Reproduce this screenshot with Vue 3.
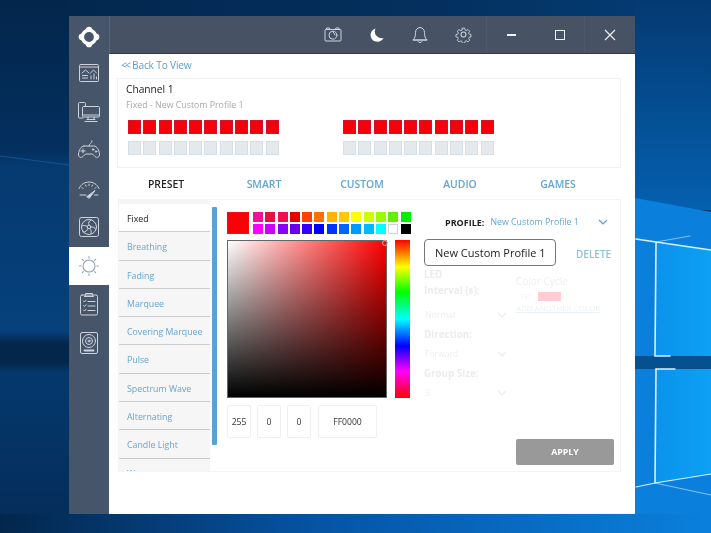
<script setup>
const leds = Array.from({ length: 10 }, (_, i) => i)
const tabs = ['PRESET', 'SMART', 'CUSTOM', 'AUDIO', 'GAMES']
const modes = ['Fixed', 'Breathing', 'Fading', 'Marquee', 'Covering Marquee', 'Pulse', 'Spectrum Wave', 'Alternating', 'Candle Light', 'Wave']
const swatches = [
  '#f0109a', '#e8103c', '#f01050', '#e80000', '#ff4000', '#ff7000', '#ffb400', '#ffc800', '#ffff00', '#ccff00', '#99ff00', '#66ee00', '#00ee00',
  '#ff00ff', '#cc00ff', '#8800ff', '#6600ee', '#3300ff', '#0000ff', '#0033ff', '#0066ff', '#0099ff', '#00bbff', '#00ffff', '#ffffff', '#000000'
]
</script>

<template>
  <div class="desktop">
    <svg class="wallpaper" width="711" height="533" viewBox="0 0 711 533">
      <defs>
        <linearGradient id="top" x1="0" y1="0" x2="1" y2="0">
          <stop offset="0" stop-color="#03264c" />
          <stop offset="0.6" stop-color="#03305e" />
          <stop offset="1" stop-color="#043e78" />
        </linearGradient>
        <linearGradient id="left" x1="0" y1="0" x2="0" y2="1">
          <stop offset="0" stop-color="#03264c" />
          <stop offset="0.28" stop-color="#042f5e" />
          <stop offset="0.31" stop-color="#053a70" />
          <stop offset="0.62" stop-color="#05417c" />
          <stop offset="0.645" stop-color="#04264b" />
          <stop offset="0.68" stop-color="#04264b" />
          <stop offset="0.7" stop-color="#05386e" />
          <stop offset="1" stop-color="#042c58" />
        </linearGradient>
        <linearGradient id="right" x1="0" y1="0" x2="0" y2="1">
          <stop offset="0" stop-color="#043a72" />
          <stop offset="1" stop-color="#0560b0" />
        </linearGradient>
        <linearGradient id="floor" x1="0" y1="0" x2="1" y2="0">
          <stop offset="0" stop-color="#03264c" />
          <stop offset="0.45" stop-color="#0654a4" />
          <stop offset="1" stop-color="#0a80dc" />
        </linearGradient>
        <linearGradient id="pane" x1="0" y1="0" x2="1" y2="0">
          <stop offset="0" stop-color="#0b93ec" />
          <stop offset="1" stop-color="#0da0f4" />
        </linearGradient>
      </defs>
      <rect width="711" height="533" fill="url(#top)" />
      <rect x="0" y="0" width="69" height="533" fill="url(#left)" />
      <path d="M0 156 L69 165" stroke="#1a5f9c" stroke-width="1.200" stroke-opacity=".7" />
      <rect x="635" y="0" width="76" height="210" fill="url(#right)" />
      <polygon points="635,198 711,212 711,533 635,533" fill="#0a80dc" />
      <rect x="0" y="514" width="711" height="19" fill="url(#floor)" />
      <polygon points="656,243 711,250 711,356 656,356" fill="url(#pane)" />
      <polygon points="656,369 711,368 711,474 655,483" fill="url(#pane)" />
      <rect x="635" y="356" width="76" height="13" fill="#05518f" />
      <g fill="none" stroke="#d8f1ff" stroke-linecap="round">
        <path d="M656 243 L655 356 L670 356" stroke-width="1.600" />
        <path d="M656 369 L655 483" stroke-width="1.600" />
        <path d="M656 369 L675 369" stroke-width="1.400" />
        <path d="M636 239 L656 242 L711 250" stroke-width="1.600" />
        <path d="M656 242 L690 236" stroke-width="0.800" stroke-opacity=".7" />
        <path d="M636 487 L655 483 L711 474" stroke-width="1.200" />
        <path d="M655 483 L711 495" stroke-width="1" stroke-opacity=".6" />
      </g>
    </svg>

    <div class="window">
      <aside class="sidebar">
        <div class="logo">
          <svg width="24" height="24" viewBox="0 0 26 26">
            <g fill="#fff">
              <circle cx="13" cy="5.200" r="3.400" />
              <circle cx="13" cy="20.800" r="3.400" />
              <circle cx="5.200" cy="13" r="3.400" />
              <circle cx="20.800" cy="13" r="3.400" />
            </g>
            <circle cx="13" cy="13" r="7.200" fill="#47556a" stroke="#fff" stroke-width="3.800" />
          </svg>
        </div>
        <div class="nav">
          <svg width="22" height="20" viewBox="0 0 22 20"><g class="ico"><rect x="1.500" y="1.500" width="19" height="17" rx="1" /><path d="M1.500 4h19M4 10l3.500-3 3.500 3M4.500 12.500h5M4.500 15h5M12.500 10l3-3 3 3M13 16v-3M16 16v-5M18.500 16v-2" /></g></svg>
        </div>
        <div class="nav">
          <svg width="24" height="22" viewBox="0 0 24 22"><g class="ico"><path d="M6 17H2.500a1 1 0 0 1-1-1V2.500a1 1 0 0 1 1-1h5a1 1 0 0 1 1 1V5" /><rect x="5.500" y="5.500" width="17" height="10.500" rx="1" /><path d="M5.500 14h17M11 16v2.500M17 16v2.500M8 20.500h12M10 18.500h8" /></g></svg>
        </div>
        <div class="nav">
          <svg width="24" height="20" viewBox="0 0 24 20"><g class="ico"><path d="M7 6h10c3 0 5 4 5.500 8 .3 3-2.500 4.500-4.500 2.500L15.500 14h-7L6 16.500C4 18.500 1.200 17 1.500 14 2 10 4 6 7 6zM12 6C12 3 15 4 15 1M6 9v4M4 11h4" /><circle cx="16" cy="9.500" r=".8" /><circle cx="19" cy="11.500" r=".8" /></g></svg>
        </div>
        <div class="nav">
          <svg width="24" height="20" viewBox="0 0 24 20"><g class="ico"><path d="M2 9.500C4 5 8 3 12 3s8 2 10 6.500" /><path d="M5 8.500l1 1M8.500 6l.6 1.200M12 5.200v1.300M15.500 6l-.6 1.200M19 8.500l-1 1" /><path d="M3 16h6M17.500 16H21" /><path d="M10 17.500l8-6-5.500 7.500z" fill="#cdd3da" /></g></svg>
        </div>
        <div class="nav">
          <svg width="22" height="22" viewBox="0 0 22 22"><g class="ico"><rect x="1.500" y="1.500" width="19" height="19" rx="2" /><circle cx="11" cy="11" r="7.500" /><circle cx="11" cy="11" r="1.800" /><path d="M11 9.200C10 7 11 4.500 13 3.800M12.700 11c2.200-.5 4.300.5 5 2.500M10 12.500c-.5 2-2.500 3.700-5 3.500M9.300 10.500C7.500 9.500 6 9 4 10M12 12.500c1.200 1.500 1.500 3 1 5" /></g></svg>
        </div>
        <div class="nav active">
          <svg width="24" height="24" viewBox="0 0 24 24"><g fill="none" stroke="#94a3b6" stroke-width="1.100" stroke-linecap="round"><circle cx="12" cy="12" r="6" /><path d="M12 2.500v1.600M12 19.900v1.600M2.500 12h1.600M19.900 12h1.600M5.300 5.300l1.100 1.100M17.600 17.600l1.100 1.100M5.300 18.700l1.100-1.100M17.600 6.400l1.100-1.100" /></g></svg>
        </div>
        <div class="nav">
          <svg width="20" height="24" viewBox="0 0 20 24"><g class="ico"><rect x="1.500" y="3" width="17" height="20" rx="1.500" /><path d="M6.500 3V1.500h7V3l1 1.500h-9zM4.500 9l1 1 1.500-1.800M9 9.500h7M4.500 13.500l1 1 1.500-1.800M9 14h7M4.500 18l1 1 1.500-1.800M9 18.500h7" /></g></svg>
        </div>
        <div class="nav">
          <svg width="20" height="24" viewBox="0 0 20 24"><g class="ico"><rect x="1.500" y="1.500" width="17" height="21" rx="1.500" /><circle cx="10" cy="10" r="6.500" /><circle cx="10" cy="10" r="3.500" /><circle cx="10" cy="10" r="1" /><path d="M5.500 19.500h9" stroke-width="1.800" /></g></svg>
        </div>
      </aside>

      <div class="body">
        <header class="titlebar">
          <div class="tools">
            <svg width="18" height="15" viewBox="0 0 18 15"><g class="ico"><rect x="1" y="2.500" width="16" height="11.500" rx="1" /><circle cx="9" cy="8.200" r="4" /><path d="M2.500 2.500V1h3v1.500M11 2.500 12 1h3v1.500M9 4.500 11 8" /></g></svg>
            <svg width="16" height="16" viewBox="0 0 16 16"><path fill="#fff" d="M6.500 1.500A6.800 6.800 0 0 0 14.500 11 6.800 6.800 0 1 1 6.500 1.500z" /></svg>
            <svg width="16" height="18" viewBox="0 0 16 18"><g class="ico"><path d="M8 1.500c-3 0-4.500 2.500-4.500 5 0 3.500-.5 5.500-2.500 7.500h14c-2-2-2.500-4-2.500-7.500 0-2.500-1.500-5-4.500-5zM1 14h14M6 15.500c.5 1.500 3.500 1.500 4 0" /></g></svg>
            <svg width="17" height="17" viewBox="0 0 24 24"><g class="ico gear"><circle cx="12" cy="12" r="3.500" /><path d="M10 1.500h4l.7 3.300 1.900.8 2.900-1.800 2.800 2.800-1.800 2.900.8 1.900 3.200.6v4l-3.200.7-.8 1.900 1.800 2.900-2.800 2.800-2.900-1.800-1.900.8-.7 3.200h-4l-.7-3.200-1.900-.8-2.900 1.800-2.800-2.800 1.800-2.900-.8-1.900-3.200-.7v-4l3.200-.6.800-1.900-1.800-2.900 2.800-2.800 2.900 1.800 1.900-.8z" transform="translate(12 12) scale(.85) translate(-12 -12)" /></g></svg>
          </div>
          <div class="winbtn divided"><span class="min"></span></div>
          <div class="winbtn"><span class="max"></span></div>
          <div class="winbtn close divided">
            <svg width="12" height="12" viewBox="0 0 12 12"><path d="M1 1l10 10M11 1 1 11" stroke="#e8ebef" stroke-width="1.300" fill="none" /></svg>
          </div>
        </header>

        <main class="content">
          <a class="back"><span class="chev">&lt;&lt;</span> Back To View</a>

          <section class="channel">
            <div class="ch-title">Channel 1</div>
            <div class="ch-sub">Fixed - New Custom Profile 1</div>
            <div class="strips">
              <div class="strip" v-for="s in 2" :key="s">
                <div class="ledrow"><i class="led on" v-for="n in leds" :key="n"></i></div>
                <div class="ledrow"><i class="led" v-for="n in leds" :key="n"></i></div>
              </div>
            </div>
          </section>

          <nav class="tabs">
            <span v-for="(t, i) in tabs" :key="t" :class="['tab', { current: i === 0 }]">{{ t }}</span>
          </nav>

          <section class="panel">
            <div class="modes">
              <ul class="modelist">
                <li v-for="(m, i) in modes" :key="m" :class="{ selected: i === 0 }">{{ m }}</li>
              </ul>
              <div class="scroll"></div>
            </div>

            <div class="picker">
              <div class="swatchrow">
                <div class="current-swatch"></div>
                <div class="swatches">
                  <i v-for="(c, i) in swatches" :key="i" :style="{ background: c }" :class="{ whiteish: c === '#ffffff' }"></i>
                </div>
              </div>
              <div class="field">
                <div class="square"><span class="handle"></span></div>
                <div class="hue"></div>
              </div>
              <div class="inputs">
                <span class="box small">255</span>
                <span class="box small">0</span>
                <span class="box small">0</span>
                <span class="box hex">FF0000</span>
              </div>
            </div>

            <div class="settings">
              <div class="profile">
                <b>PROFILE:</b>
                <span class="pname">New Custom Profile 1</span>
                <svg width="10" height="6" viewBox="0 0 10 6"><path d="M1 1l4 4 4-4" fill="none" stroke="#5a9fd0" stroke-width="1.200" /></svg>
              </div>
              <div class="nameline">
                <div class="namebox">New Custom Profile 1</div>
                <span class="delete">DELETE</span>
              </div>
              <div class="faint">
                <div class="fcol">
                  <div class="flabel">LED</div>
                  <div class="flabel">Interval (s):</div>
                  <div class="fsel first">Normal <svg width="10" height="6" viewBox="0 0 10 6"><path d="M1 1l4 4 4-4" /></svg></div>
                  <div class="flabel spaced">Direction:</div>
                  <div class="fsel">Forward <svg width="10" height="6" viewBox="0 0 10 6"><path d="M1 1l4 4 4-4" /></svg></div>
                  <div class="flabel spaced">Group Size:</div>
                  <div class="fsel">3 <svg width="10" height="6" viewBox="0 0 10 6"><path d="M1 1l4 4 4-4" /></svg></div>
                </div>
                <div class="fcol2">
                  <div class="fcycle">Color Cycle</div>
                  <div class="fpink"><span>1ST</span><i></i></div>
                  <div class="fadd">ADD ANOTHER COLOR</div>
                </div>
              </div>
              <button class="apply">APPLY</button>
            </div>
          </section>
        </main>
      </div>
    </div>
  </div>
</template>

<style>
html, body { margin: 0; background: #04305c; }
</style>

<style scoped>
.desktop {
  position: relative;
  width: 711px;
  height: 533px;
  overflow: hidden;
  font-family: "Open Sans", "Noto Sans", sans-serif;
}
.wallpaper { position: absolute; inset: 0; display: block; }
.window {
  position: absolute;
  left: 69px;
  top: 16px;
  width: 566px;
  height: 498px;
  display: flex;
  background: #fff;
  filter: blur(0.3px);
}
.ico { fill: none; stroke: #cdd3da; stroke-width: 1; stroke-linecap: round; stroke-linejoin: round; }
.gear { stroke-width: 1.500; }

.sidebar { width: 40px; flex: none; background: #47556a; display: flex; flex-direction: column; }
.logo { height: 38px; flex: none; box-sizing: border-box; padding-top: 3px; display: flex; align-items: center; justify-content: center; }
.nav { height: 38.500px; flex: none; display: flex; align-items: center; justify-content: center; }
.nav.active { background: #fff; }

.body { flex: 1; min-width: 0; display: flex; flex-direction: column; }
.titlebar {
  height: 38px;
  flex: none;
  box-sizing: border-box;
  background: #475364;
  border-left: 1px solid #5a6678;
  border-bottom: 1px solid #2f3a48;
  display: flex;
  align-items: center;
  justify-content: flex-end;
}
.tools { display: flex; align-items: center; gap: 27px; padding-right: 14px; }
.winbtn {
  width: 49px;
  height: 100%;
  display: flex;
  align-items: center;
  justify-content: center;
  box-sizing: border-box;
}
.winbtn.divided { border-left: 1px solid #4d596b; }
.winbtn.close { width: 51px; }
.min { width: 9px; height: 2px; background: #f2f4f6; }
.max { width: 8px; height: 8px; border: 1.500px solid #eef0f3; }

.content { flex: 1; padding: 0 14px 0 8px; min-height: 0; }
.back { display: block; height: 24px; line-height: 23px; padding-left: 4px; font-size: 10.200px; color: #5d9fce; letter-spacing: -0.2px; white-space: nowrap; }
.chev { letter-spacing: -1.500px; margin-right: 0; }

.channel {
  box-sizing: border-box;
  height: 90px;
  border: 1px solid #f1f2f3;
  padding: 3px 8px 0;
}
.ch-title { font-size: 10.200px; line-height: 14px; color: #222; }
.ch-sub { font-size: 8.800px; line-height: 14px; margin-top: 2px; color: #a9a9a9; }
.strips { display: flex; gap: 64.300px; margin: 8px 0 0 2px; }
.strip { display: flex; flex-direction: column; gap: 7px; }
.ledrow { display: flex; gap: 2.300px; }
.led { display: block; width: 13px; height: 14px; box-sizing: border-box; background: #e6e9ec; border: 1px solid #d3e0ea; }
.led.on { background: #f4000a; border-color: #d4142a; }

.tabs { display: grid; grid-template-columns: repeat(5, 98px); height: 30px; align-items: center; margin-top: 1px; }
.tab { text-align: center; font-size: 10.400px; font-weight: 600; color: #63a5d3; }
.tab.current { color: #222; }

.panel {
  box-sizing: border-box;
  height: 273px;
  margin-left: 1px;
  width: 503px;
  border: 1px solid #f3f4f5;
  display: flex;
}
.modes { width: 98px; flex: none; display: flex; position: relative; height: 271px; overflow: hidden; }
.modelist { list-style: none; margin: 0; padding: 4px 0 0; width: 91px; background: #f6f6f6; }
.modelist li {
  box-sizing: border-box;
  height: 28.300px;
  line-height: 27px;
  padding: 2px 0 0 8px;
  font-size: 8.800px;
  color: #68a5cf;
  border-bottom: 1.500px solid #c9cbcc;
  white-space: nowrap;
}
.modelist li.selected { color: #222; background: #fff; }
.scroll { width: 5px; margin: 7px 0 0 2px; height: 238px; background: #5aa2d6; border-radius: 1px; }

.picker { width: 184px; flex: none; padding: 12px 0 0 10px; box-sizing: content-box; }
.swatchrow { display: flex; gap: 4px; height: 22px; }
.current-swatch { width: 22px; height: 22px; background: #fb0006; border: 1px solid #e11; box-sizing: border-box; }
.swatches { display: grid; grid-template-columns: repeat(13, 10px); grid-template-rows: 10px 10px; column-gap: 2.300px; row-gap: 2px; }
.swatches i { display: block; }
.swatches i.whiteish { box-sizing: border-box; border: 1px solid #d0d0d0; }
.field { display: flex; gap: 8px; margin-top: 6px; height: 158px; }
.square {
  width: 160px;
  box-sizing: border-box;
  border: 1px solid #666;
  position: relative;
  background: linear-gradient(to top, #000, rgba(0, 0, 0, 0)), linear-gradient(to right, #fff, #f00);
}
.handle { position: absolute; right: -2px; top: -1px; width: 4px; height: 4px; border: 1px solid #e8b0b0; border-radius: 50%; }
.hue {
  width: 15px;
  background: linear-gradient(to bottom, #f00 0%, #ff0 17%, #0f0 33%, #0ff 50%, #00f 67%, #f0f 83%, #f00 100%);
}
.inputs { display: flex; gap: 6px; margin-top: 7px; }
.box {
  box-sizing: border-box;
  height: 33px;
  border: 1px solid #f0f0f0;
  border-radius: 2px;
  display: flex;
  align-items: center;
  justify-content: center;
  font-size: 8.600px;
  color: #333;
}
.box.small { width: 24px; }
.box.hex { width: 59px; margin-left: 1px; }

.settings { flex: 1; position: relative; padding: 0 0 0 13px; min-width: 0; }
.profile { display: flex; align-items: center; height: 12px; margin: 16px 0 0 21px; font-size: 9px; white-space: nowrap; }
.profile b { font-weight: 700; color: #222; margin-right: 6px; }
.pname { color: #66a6d2; font-size: 8.800px; margin-right: 19px; }
.nameline { display: flex; align-items: center; margin-top: 11px; }
.namebox {
  box-sizing: border-box;
  width: 132px;
  height: 27px;
  border: 1px solid #777;
  border-radius: 4px;
  padding-left: 10px;
  line-height: 25px;
  font-size: 11px;
  color: #222;
  white-space: nowrap;
}
.delete { font-size: 10px; color: #8fc0dd; margin-left: 20px; margin-top: 2px; font-weight: 600; }
.faint { display: flex; margin-top: 1px; }
.fcol { width: 92px; flex: none; }
.flabel { font-size: 9.800px; font-weight: 700; color: #ececec; line-height: 16px; }
.flabel.spaced { margin-top: 2px; }
.fsel { display: flex; justify-content: space-between; align-items: center; width: 82px; padding-left: 1px; font-size: 8.600px; color: #eeeeee; height: 20px; margin-top: 1px; }
.fsel.first { margin-top: 6px; }
.fsel svg { fill: none; stroke: #ececec; stroke-width: 1.200; }
.fcycle { font-size: 10px; color: #efefef; margin-top: 7px; line-height: 14px; }
.fpink { display: flex; align-items: center; gap: 6px; font-size: 7px; color: #f0f0f0; padding-left: 4px; height: 10px; margin-top: 3px; }
.fpink i { display: block; width: 23px; height: 9px; background: #ffcdd2; }
.fadd { font-size: 8px; color: #ebf0f4; text-decoration: underline; margin-top: 1px; white-space: nowrap; }
.apply {
  position: absolute;
  left: 105px;
  top: 239px;
  width: 98px;
  height: 26px;
  border: 0;
  border-radius: 2px;
  background: #999;
  color: #fff;
  font: 700 8.800px "Open Sans", sans-serif;
}
</style>
